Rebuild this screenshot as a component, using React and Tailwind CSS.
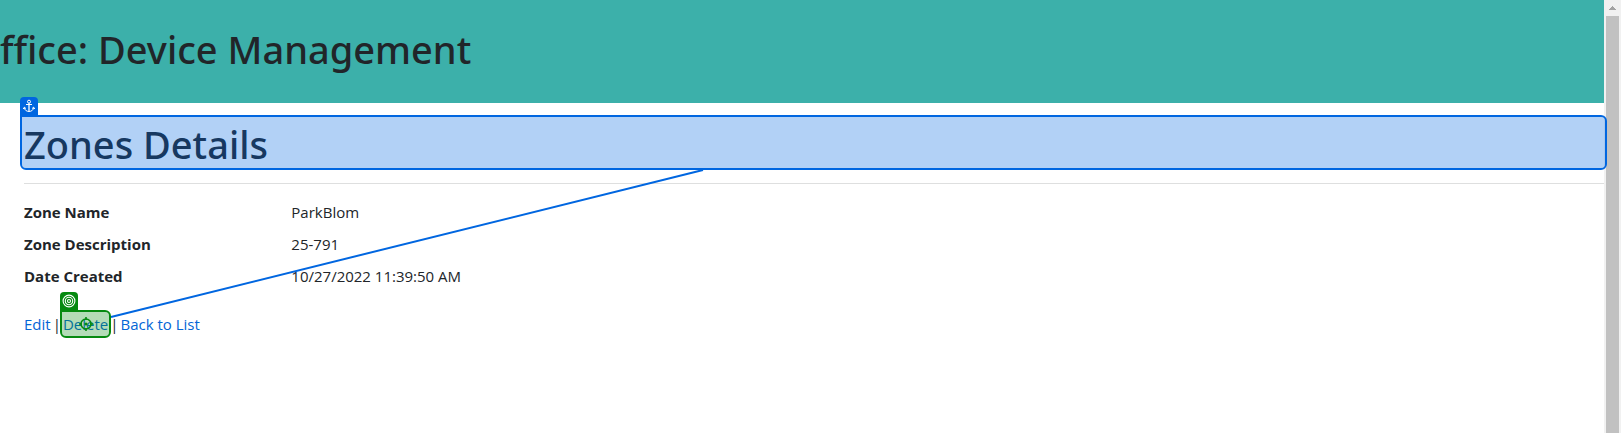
import React from "react";

const rows = [
  ["Zone Name", "ParkBlom"],
  ["Zone Description", "25-791"],
  ["Date Created", "10/27/2022 11:39:50 AM"],
];

function AnchorIcon() {
  return (
    <svg viewBox="0 0 14 14" className="h-3.5 w-3.5" fill="none" stroke="white" aria-hidden="true">
      <circle cx="7" cy="2.7" r="1.5" strokeWidth="1" />
      <path strokeWidth="1.3" d="M7 4.2V12.4" />
      <path strokeWidth="1" d="M4 5.5H10M2.4 8.4C2.4 11 4.4 12.4 7 12.5C9.6 12.4 11.6 11 11.6 8.4M1.2 10L2.4 8.2L4 9.6M12.8 10L11.6 8.2L10 9.6" />
    </svg>
  );
}

function TargetIcon() {
  return (
    <svg viewBox="0 0 14 14" className="h-3.5 w-3.5" fill="none" stroke="white" strokeWidth="1.1" aria-hidden="true">
      <circle cx="7" cy="7" r="5.9" />
      <circle cx="7" cy="7" r="3.7" />
      <circle cx="7" cy="7" r="1.5" />
    </svg>
  );
}

function Crosshair() {
  return (
    <svg viewBox="0 0 16 16" className="h-4 w-4" fill="none" stroke="#068a10" strokeWidth="1.6" aria-hidden="true">
      <circle cx="8" cy="8" r="5" />
      <path d="M8 1V4M8 12V15M1 8H4M12 8H15" />
      <circle cx="8" cy="8" r="1.6" fill="#068a10" stroke="none" />
    </svg>
  );
}

function Scrollbar() {
  return (
    <div className="flex w-[17px] shrink-0 flex-col bg-[#f1f1f1]" aria-hidden="true">
      <div className="flex h-4 items-center justify-center">
        <svg viewBox="0 0 7 4" className="h-1 w-[7px]" fill="#a3a3a3" shapeRendering="crispEdges">
          <path d="M3 0H4V1H5V2H6V3H7V4H0V3H1V2H2V1H3Z" />
        </svg>
      </div>
      <div className="mx-0.5 flex-1 bg-[#c1c1c1]" />
    </div>
  );
}

export default function App() {
  return (
    <div className="relative flex h-screen overflow-hidden bg-white font-['Open_Sans','Noto_Sans',sans-serif] text-[15px] leading-6 text-[#212529]">
      <div className="min-w-0 flex-1">
        <header className="h-[103px] bg-[#3cb0aa] pt-[25px]">
          <h1 className="font-['Noto_Sans',sans-serif] text-[38px] leading-12 font-medium whitespace-nowrap">ffice: Device Management</h1>
        </header>
        <main className="pt-[15px] pl-6">
          <div className="relative z-10">
            <h1 className="pt-1 font-['Noto_Sans',sans-serif] text-[38px] leading-[45px] font-medium">Zones Details</h1>
            <div className="absolute -inset-y-[3px] -right-[3px] -left-1 rounded-md rounded-tl-none border-2 border-[#0066e0] bg-[#0066e0]/30 bg-clip-padding" />
            <span className="absolute -top-[21px] -left-1 flex h-[18px] w-[18px] items-center justify-center rounded-t bg-[#0066e0]">
              <AnchorIcon />
            </span>
          </div>
          <hr className="mt-4 border-[#dedfdf]" />
          <dl className="-mx-3 mt-4">
            {rows.map(([name, value]) => (
              <div key={name} className="mb-2 grid grid-cols-6">
                <dt className="px-3 font-bold">{name}</dt>
                <dd className="col-span-5 px-3">{value}</dd>
              </div>
            ))}
          </dl>
          <div className="mt-6 flex gap-0.5 whitespace-nowrap">
            <a href="#edit" className="text-[#0366d6]">Edit</a>
            <span>|</span>
            <span className="relative z-10">
              <a href="#delete" className="text-[#0366d6]">Delete</a>
              <span className="pointer-events-none absolute -inset-x-[3px] -inset-y-0.5 flex items-center justify-center rounded-md rounded-tl-none border-2 border-[#068a10] bg-[#068a10]/30 bg-clip-padding">
                <Crosshair />
              </span>
              <span className="absolute -top-5 -left-[3px] flex h-[18px] w-[18px] items-center justify-center rounded-t bg-[#068a10]">
                <TargetIcon />
              </span>
            </span>
            <span>|</span>
            <a href="#list" className="text-[#0366d6]">Back to List</a>
          </div>
        </main>
      </div>
      <Scrollbar />
      <svg className="pointer-events-none absolute inset-0 h-full w-full" aria-hidden="true">
        <path d="M703 170L111 317" stroke="#0066e0" strokeWidth="2" />
      </svg>
    </div>
  );
}
